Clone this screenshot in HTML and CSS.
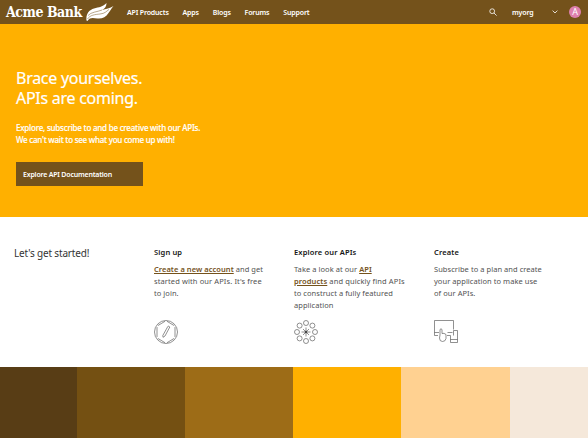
FILE: index.html
```
<!DOCTYPE html>
<html lang="en">
<head>
<meta charset="utf-8">
<title>Acme Bank</title>
<link rel="stylesheet" href="styles.css">
</head>
<body>
<header class="bar">
  <a class="brand"><span class="brand-name">Acme Bank</span>
    <svg class="leaf" width="30" height="20" viewBox="0 0 30 20"><path fill="#fff" d="M.5 18.500C-.3 12 3 8 8 6.500C13 5 17 5 20.500 1C20.500 4.500 19 6.500 16 8C20 7 24 6.500 27.500 4C25 7 24 9 22.500 11C20 15 16 17 11.500 16.500C7 16 4 15 1.500 19Z"/><path d="M1.500 17C4 13 9 12.500 14 12S20 9.500 23 7.500M2 13.500C5 10 11 10 16 8" fill="none" stroke="#74521b" stroke-width=".5"/></svg>
  </a>
  <nav class="nav"><a>API Products</a><a>Apps</a><a>Blogs</a><a>Forums</a><a>Support</a></nav>
  <div class="tools">
    <svg class="search" width="8" height="8" viewBox="0 0 8 8" fill="none" stroke="#fff" stroke-width=".8"><circle cx="3.200" cy="3.200" r="2.400"/><path d="M5 5l2.600 2.600"/></svg>
    <span class="org">myorg</span>
    <svg class="chev" width="6" height="4" viewBox="0 0 6 4" fill="none" stroke="#fff" stroke-width=".8"><path d="M.6.600L3 3 5.400.600"/></svg>
    <span class="avatar">A</span>
  </div>
</header>
<section class="hero">
  <h1><span>Brace yourselves.</span><span>APIs are coming.</span></h1>
  <p><span>Explore, subscribe to and be creative with our APIs.</span><span class="tight">We can't wait to see what you come up with!</span></p>
  <a class="button"><span>Explore API Documentation</span></a>
</section>
<section class="start">
  <h2><span>Let's get started!</span></h2>
  <article>
    <h3><span>Sign up</span></h3>
    <p><span><a>Create a new account</a> and get</span><span class="wide">started with our APIs. It's free</span><span>to join.</span></p>
    <svg width="24" height="24" viewBox="0 0 24 24" fill="none" stroke="#555" stroke-width=".65"><circle cx="12" cy="12" r="11.500"/><path d="M3 7v10M21 7v10M4 5.500L11 1.300M13 1.300l7 4.200M4 18.500l7 4.200M13 22.700l7-4.200M8.800 15.500L13.800 6.500q1-1 2 .500L11 16l-2 1.300z"/></svg>
  </article>
  <article>
    <h3><span>Explore our APIs</span></h3>
    <p><span>Take a look at our <a>API</a></span><span class="wide"><a>products</a> and quickly find APIs</span><span>to construct a fully featured</span><span>application</span></p>
    <svg width="24" height="24" viewBox="0 0 24 24" fill="none" stroke="#555" stroke-width=".65"><circle cx="12" cy="3" r="2.500"/><circle cx="18.400" cy="5.600" r="2.500"/><circle cx="21" cy="12" r="2.500"/><circle cx="18.400" cy="18.400" r="2.500"/><circle cx="12" cy="21" r="2.500"/><circle cx="5.600" cy="18.400" r="2.500"/><circle cx="3" cy="12" r="2.500"/><circle cx="5.600" cy="5.600" r="2.500"/><path d="M12 7.500v9M7.500 12h9M9 9l6 6M15 9l-6 6"/><circle cx="12" cy="12" r="1" fill="#222"/></svg>
  </article>
  <article>
    <h3><span>Create</span></h3>
    <p><span>Subscribe to a plan and create</span><span>your application to make use</span><span>of our APIs.</span></p>
    <svg width="24" height="24" viewBox="0 0 24 24" fill="none" stroke="#555" stroke-width=".65"><path d="M4 15.500H.5V.500h19v9M.5 12.500H5M13.500 12.500h5M13 15.500h3.500M19.500 10.500h4v12h-7v-7M19.500 10.500v5M16.500 19.500h7M6 15V9.500q1-1.500 2 0v4q2-.800 4 1v4q-.500 3-3.500 3Q5.500 21.500 5.500 18z"/></svg>
  </article>
</section>
<footer class="palette"><i></i><i></i><i></i><i></i><i></i><i></i></footer>
</body>
</html>
```
FILE: styles.css
```
* { box-sizing: border-box; }
body { margin: 0; width: 588px; height: 438px; overflow: hidden; background: #fff; font-family: "Noto Sans", sans-serif; }
h1, h2, h3, p { margin: 0; font-weight: 400; }
h1 span, h2 span, h3 span, p span { display: block; width: max-content; white-space: nowrap; }
.bar { display: flex; align-items: center; height: 24px; background: #74521b; color: #fff; font-size: 7px; font-weight: 600; letter-spacing: -0.160px; }
.brand { display: flex; align-items: center; width: 127px; padding-left: 6px; }
.brand-name { width: 80px; font: bold 14px/24px "DejaVu Serif Condensed", "DejaVu Serif", serif; letter-spacing: -0.450px; white-space: nowrap; }
.leaf { flex: none; }
.nav { display: flex; gap: 13.900px; white-space: nowrap; }
.tools { display: flex; align-items: center; margin-left: auto; padding-right: 7px; }
.org { width: 40px; margin-left: 15px; }
.avatar { width: 12px; height: 12px; margin-left: 11px; border-radius: 50%; background: #df80ae; font-size: 9px; font-weight: 400; line-height: 12px; text-align: center; }
.hero { height: 193px; padding: 44px 16px 0; background: #ffb000; color: #fff; }
.hero h1 { font-size: 16px; line-height: 20px; letter-spacing: -0.270px; -webkit-text-stroke: 0.200px #fff; }
.hero p { margin-top: 14px; font-size: 8px; font-weight: 500; line-height: 12px; letter-spacing: -0.220px; -webkit-text-stroke: 0.150px #fff; }
.hero p .tight { letter-spacing: -0.250px; }
.button { display: flex; align-items: center; width: 127px; height: 24px; margin-top: 16px; padding-left: 7px; background: #74521b; font-size: 7px; font-weight: 600; letter-spacing: -0.200px; white-space: nowrap; }
.start { display: grid; grid-template-columns: repeat(4, 140px); height: 150px; padding: 29px 0 0 14px; color: #525252; }
.start h2 { font-size: 10px; line-height: 15px; letter-spacing: -0.170px; color: #333; }
.start article { display: flex; flex-direction: column; }
.start h3 { font-size: 7.500px; font-weight: 600; line-height: 12px; letter-spacing: 0.150px; color: #161616; }
.start p { height: 57px; margin-top: 5px; font-size: 7.500px; line-height: 12px; letter-spacing: 0.050px; }
.start p .wide { letter-spacing: 0.110px; }
.start p a { color: #74521b; font-weight: 600; text-decoration: underline; }
.palette { display: grid; grid-template-columns: 76.500px 108.500px 108px 108px 109px 78px; height: 71px; }
.palette i:nth-child(1) { background: #583d15; }
.palette i:nth-child(2) { background: #745012; }
.palette i:nth-child(3) { background: #9d6c17; }
.palette i:nth-child(4) { background: #ffb000; }
.palette i:nth-child(5) { background: #ffd191; }
.palette i:nth-child(6) { background: #f5e8da; }
```
